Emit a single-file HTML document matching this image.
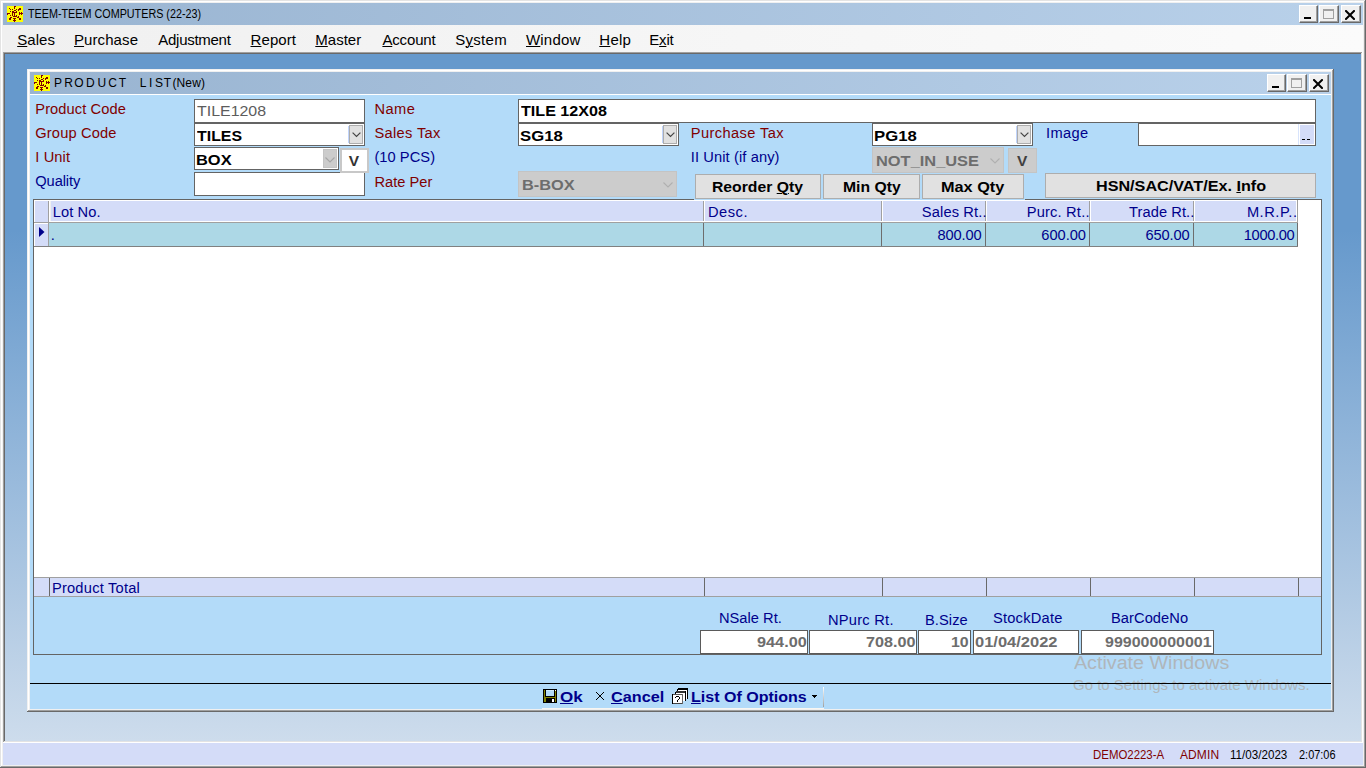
<!DOCTYPE html>
<html><head><meta charset="utf-8">
<style>
*{margin:0;padding:0;box-sizing:border-box}
html,body{width:1366px;height:768px;overflow:hidden;background:#f0f0f0;font-family:"Liberation Sans",sans-serif}
.a{position:absolute}
.t{position:absolute;white-space:nowrap;line-height:20px;font-family:"Liberation Sans",sans-serif}
u{text-decoration:underline;text-decoration-thickness:1px;text-underline-offset:1px}
</style></head><body>

<div class="a" style="left:0px;top:0px;width:1366px;height:768px;background:#f0f0f0"></div>
<div class="a" style="left:0px;top:0px;width:1366px;height:1px;background:#e3e3e3"></div>
<div class="a" style="left:0px;top:0px;width:1px;height:768px;background:#e3e3e3"></div>
<div class="a" style="left:1px;top:1px;width:1364px;height:1px;background:#fff"></div>
<div class="a" style="left:1px;top:1px;width:1px;height:766px;background:#fff"></div>
<div class="a" style="left:1364px;top:1px;width:1px;height:766px;background:#a0a0a0"></div>
<div class="a" style="left:1px;top:766px;width:1364px;height:1px;background:#a0a0a0"></div>
<div class="a" style="left:1365px;top:0px;width:1px;height:768px;background:#696969"></div>
<div class="a" style="left:0px;top:767px;width:1366px;height:1px;background:#696969"></div>
<div class="a" style="left:3px;top:3px;width:1360px;height:22px;background:linear-gradient(to right,#99b4d1,#b9d1ea)"></div>
<svg class="a" style="left:7px;top:6px" width="16" height="16" viewBox="0 0 16 16" shape-rendering="crispEdges"><rect width="16" height="16" fill="#ff0"/><path d="M7 0h1v1h-1zM8 0h1v1h-1zM7 1h1v1h-1zM7 2h1v1h-1zM2 2h1v1h-1zM12 2h1v1h-1zM13 2h1v1h-1zM3 3h1v1h-1zM5 3h1v1h-1zM9 3h1v1h-1zM11 3h1v1h-1zM12 3h1v1h-1zM13 3h1v1h-1zM7 4h1v1h-1zM8 4h1v1h-1zM11 4h1v1h-1zM3 5h1v1h-1zM5 5h1v1h-1zM6 5h1v1h-1zM9 5h1v1h-1zM5 6h1v1h-1zM6 6h1v1h-1zM7 6h1v1h-1zM8 6h1v1h-1zM9 6h1v1h-1zM12 6h1v1h-1zM14 6h1v1h-1zM0 7h1v1h-1zM1 7h1v1h-1zM2 7h1v1h-1zM5 7h1v1h-1zM7 7h1v1h-1zM12 7h1v1h-1zM13 7h1v1h-1zM14 7h1v1h-1zM15 7h1v1h-1zM0 8h1v1h-1zM5 8h1v1h-1zM7 8h1v1h-1zM12 8h1v1h-1zM14 8h1v1h-1zM3 9h1v1h-1zM5 9h1v1h-1zM7 9h1v1h-1zM9 9h1v1h-1zM6 10h1v1h-1zM7 10h1v1h-1zM8 10h1v1h-1zM9 10h1v1h-1zM11 10h1v1h-1zM3 11h1v1h-1zM4 11h1v1h-1zM10 11h1v1h-1zM11 11h1v1h-1zM2 12h1v1h-1zM3 12h1v1h-1zM6 12h1v1h-1zM7 12h1v1h-1zM8 12h1v1h-1zM12 12h1v1h-1zM13 12h1v1h-1zM2 13h1v1h-1zM3 13h1v1h-1zM7 13h1v1h-1zM12 13h1v1h-1zM13 13h1v1h-1zM6 14h1v1h-1zM7 14h1v1h-1zM8 14h1v1h-1zM7 15h1v1h-1z" fill="#800000"/></svg>
<div class="t" style="left:27.60px;top:4px;font-size:12px;font-weight:400;color:#000;transform:scaleX(0.8984);transform-origin:0 0">TEEM-TEEM COMPUTERS (22-23)</div>
<div class="a" style="left:1299px;top:5px;width:19px;height:18px;background:#f0f0f0;border-top:1px solid #fff;border-left:1px solid #fff;border-right:1px solid #696969;border-bottom:1px solid #696969;box-shadow:inset -1px -1px 0 #a0a0a0"></div><div class="a" style="left:1304px;top:17px;width:7px;height:2px;background:#000"></div>
<div class="a" style="left:1319px;top:5px;width:20px;height:18px;background:#f0f0f0;border-top:1px solid #fff;border-left:1px solid #fff;border-right:1px solid #696969;border-bottom:1px solid #696969;box-shadow:inset -1px -1px 0 #a0a0a0"></div><div class="a" style="left:1323px;top:9px;width:11px;height:10px;border:1px solid #a0a0a0;border-top:2px solid #a0a0a0"></div>
<div class="a" style="left:1341px;top:5px;width:20px;height:18px;background:#f0f0f0;border-top:1px solid #fff;border-left:1px solid #fff;border-right:1px solid #696969;border-bottom:1px solid #696969;box-shadow:inset -1px -1px 0 #a0a0a0"></div><svg class="a" style="left:1345px;top:10px" width="10" height="10" viewBox="0 0 10 10"><path d="M1 1L9 9M9 1L1 9" stroke="#000" stroke-width="2" stroke-linecap="square"/></svg>
<div class="a" style="left:3px;top:25px;width:1360px;height:27px;background:linear-gradient(to right,#f0f0f0,#fbfbfb)"></div>
<div class="t" style="left:17.2px;top:30px;font-size:15px;font-weight:400;color:#000;letter-spacing:0.075px"><u>S</u>ales</div>
<div class="t" style="left:74.0px;top:30px;font-size:15px;font-weight:400;color:#000;letter-spacing:0.086px"><u>P</u>urchase</div>
<div class="t" style="left:158.3px;top:30px;font-size:15px;font-weight:400;color:#000;letter-spacing:-0.278px">Ad<u>j</u>ustment</div>
<div class="t" style="left:250.5px;top:30px;font-size:15px;font-weight:400;color:#000;letter-spacing:0.1px"><u>R</u>eport</div>
<div class="t" style="left:315.3px;top:30px;font-size:15px;font-weight:400;color:#000"><u>M</u>aster</div>
<div class="t" style="left:382.4px;top:30px;font-size:15px;font-weight:400;color:#000;letter-spacing:-0.15px"><u>A</u>ccount</div>
<div class="t" style="left:455.2px;top:30px;font-size:15px;font-weight:400;color:#000;letter-spacing:0.3px">S<u>y</u>stem</div>
<div class="t" style="left:526.0px;top:30px;font-size:15px;font-weight:400;color:#000;letter-spacing:0.18px"><u>W</u>indow</div>
<div class="t" style="left:599.3px;top:30px;font-size:15px;font-weight:400;color:#000;letter-spacing:0.233px"><u>H</u>elp</div>
<div class="t" style="left:649.3px;top:30px;font-size:15px;font-weight:400;color:#000;letter-spacing:-0.2px">E<u>x</u>it</div>
<div class="a" style="left:3px;top:52px;width:1360px;height:691px;background:#fff"></div>
<div class="a" style="left:3px;top:52px;width:1359px;height:690px;background:#e3e3e3"></div>
<div class="a" style="left:3px;top:52px;width:1359px;height:1px;background:#a0a0a0"></div>
<div class="a" style="left:3px;top:52px;width:1px;height:690px;background:#a0a0a0"></div>
<div class="a" style="left:4px;top:53px;width:1357px;height:688px;background:#696969"></div>
<div class="a" style="left:5px;top:54px;width:1356px;height:687px;background:linear-gradient(to bottom,#6699cc 0px,#6699cc 176px,#cddcec 687px)"></div>
<div class="a" style="left:3px;top:743px;width:1360px;height:22px;background:#d4dcf8"></div>
<div class="t" style="left:1093.35px;top:745px;font-size:12px;font-weight:400;color:#800000;transform:scaleX(0.9527);transform-origin:0 0">DEMO2223-A</div>
<div class="t" style="left:1180.0px;top:745px;font-size:12px;font-weight:400;color:#800000;letter-spacing:0.1px">ADMIN</div>
<div class="t" style="left:1230.03px;top:745px;font-size:12px;font-weight:400;color:#000;transform:scaleX(0.969);transform-origin:0 0">11/03/2023</div>
<div class="t" style="left:1299.19px;top:745px;font-size:12px;font-weight:400;color:#000;transform:scaleX(0.9128);transform-origin:0 0">2:07:06</div>
<div class="a" style="left:27px;top:69px;width:1307px;height:643px;background:#696969"></div>
<div class="a" style="left:27px;top:69px;width:1306px;height:642px;background:#f0f0f0"></div>
<div class="a" style="left:28px;top:70px;width:1305px;height:641px;background:#a0a0a0"></div>
<div class="a" style="left:28px;top:70px;width:1304px;height:640px;background:#fff"></div>
<div class="a" style="left:29px;top:71px;width:1303px;height:639px;background:#f0f0f0"></div>
<div class="a" style="left:30px;top:72px;width:1301px;height:22px;background:linear-gradient(to right,#99b4d1,#b9d1ea)"></div>
<div class="a" style="left:30px;top:94px;width:1301px;height:1px;background:#fff"></div>
<div class="a" style="left:30px;top:95px;width:1301px;height:614px;background:#b3dbf9"></div>
<svg class="a" style="left:34px;top:75px" width="16" height="16" viewBox="0 0 16 16" shape-rendering="crispEdges"><rect width="16" height="16" fill="#ff0"/><path d="M7 0h1v1h-1zM8 0h1v1h-1zM7 1h1v1h-1zM7 2h1v1h-1zM2 2h1v1h-1zM12 2h1v1h-1zM13 2h1v1h-1zM3 3h1v1h-1zM5 3h1v1h-1zM9 3h1v1h-1zM11 3h1v1h-1zM12 3h1v1h-1zM13 3h1v1h-1zM7 4h1v1h-1zM8 4h1v1h-1zM11 4h1v1h-1zM3 5h1v1h-1zM5 5h1v1h-1zM6 5h1v1h-1zM9 5h1v1h-1zM5 6h1v1h-1zM6 6h1v1h-1zM7 6h1v1h-1zM8 6h1v1h-1zM9 6h1v1h-1zM12 6h1v1h-1zM14 6h1v1h-1zM0 7h1v1h-1zM1 7h1v1h-1zM2 7h1v1h-1zM5 7h1v1h-1zM7 7h1v1h-1zM12 7h1v1h-1zM13 7h1v1h-1zM14 7h1v1h-1zM15 7h1v1h-1zM0 8h1v1h-1zM5 8h1v1h-1zM7 8h1v1h-1zM12 8h1v1h-1zM14 8h1v1h-1zM3 9h1v1h-1zM5 9h1v1h-1zM7 9h1v1h-1zM9 9h1v1h-1zM6 10h1v1h-1zM7 10h1v1h-1zM8 10h1v1h-1zM9 10h1v1h-1zM11 10h1v1h-1zM3 11h1v1h-1zM4 11h1v1h-1zM10 11h1v1h-1zM11 11h1v1h-1zM2 12h1v1h-1zM3 12h1v1h-1zM6 12h1v1h-1zM7 12h1v1h-1zM8 12h1v1h-1zM12 12h1v1h-1zM13 12h1v1h-1zM2 13h1v1h-1zM3 13h1v1h-1zM7 13h1v1h-1zM12 13h1v1h-1zM13 13h1v1h-1zM6 14h1v1h-1zM7 14h1v1h-1zM8 14h1v1h-1zM7 15h1v1h-1z" fill="#800000"/></svg>
<div class="t" style="left:54.1px;top:73px;font-size:12px;color:#000">P</div>
<div class="t" style="left:64.19999999999999px;top:73px;font-size:12px;color:#000">R</div>
<div class="t" style="left:74.19999999999999px;top:73px;font-size:12px;color:#000">O</div>
<div class="t" style="left:85.89999999999999px;top:73px;font-size:12px;color:#000">D</div>
<div class="t" style="left:97.6px;top:73px;font-size:12px;color:#000">U</div>
<div class="t" style="left:108.19999999999999px;top:73px;font-size:12px;color:#000">C</div>
<div class="t" style="left:118.69999999999999px;top:73px;font-size:12px;color:#000">T</div>
<div class="t" style="left:139.79999999999998px;top:73px;font-size:12px;color:#000">L</div>
<div class="t" style="left:149.1px;top:73px;font-size:12px;color:#000">I</div>
<div class="t" style="left:155.0px;top:73px;font-size:12px;color:#000">S</div>
<div class="t" style="left:163.79999999999998px;top:73px;font-size:12px;color:#000">T</div>
<div class="t" style="left:172.5px;top:73px;font-size:12px;color:#000;letter-spacing:0.1px">(New)</div>
<div class="a" style="left:1267px;top:74px;width:19px;height:18px;background:#f0f0f0;border-top:1px solid #fff;border-left:1px solid #fff;border-right:1px solid #696969;border-bottom:1px solid #696969;box-shadow:inset -1px -1px 0 #a0a0a0"></div><div class="a" style="left:1272px;top:86px;width:7px;height:2px;background:#000"></div>
<div class="a" style="left:1287px;top:74px;width:20px;height:18px;background:#f0f0f0;border-top:1px solid #fff;border-left:1px solid #fff;border-right:1px solid #696969;border-bottom:1px solid #696969;box-shadow:inset -1px -1px 0 #a0a0a0"></div><div class="a" style="left:1291px;top:78px;width:11px;height:10px;border:1px solid #a0a0a0;border-top:2px solid #a0a0a0"></div>
<div class="a" style="left:1309px;top:74px;width:20px;height:18px;background:#f0f0f0;border-top:1px solid #fff;border-left:1px solid #fff;border-right:1px solid #696969;border-bottom:1px solid #696969;box-shadow:inset -1px -1px 0 #a0a0a0"></div><svg class="a" style="left:1313px;top:79px" width="10" height="10" viewBox="0 0 10 10"><path d="M1 1L9 9M9 1L1 9" stroke="#000" stroke-width="2" stroke-linecap="square"/></svg>
<div class="t" style="left:35.3px;top:99px;font-size:14.67px;font-weight:400;color:#800000;letter-spacing:0.082px">Product Code</div>
<div class="t" style="left:35.3px;top:123px;font-size:14.67px;font-weight:400;color:#800000;letter-spacing:0.144px">Group Code</div>
<div class="t" style="left:35.3px;top:147px;font-size:14.67px;font-weight:400;color:#800000;letter-spacing:0.1px">I Unit</div>
<div class="t" style="left:35.3px;top:171px;font-size:14.67px;font-weight:400;color:#00008b;letter-spacing:-0.1px">Quality</div>
<div class="t" style="left:374.4px;top:99px;font-size:14.67px;font-weight:400;color:#800000;letter-spacing:0.467px">Name</div>
<div class="t" style="left:374.4px;top:123px;font-size:14.67px;font-weight:400;color:#800000;letter-spacing:0.338px">Sales Tax</div>
<div class="t" style="left:374.4px;top:147px;font-size:14.67px;font-weight:400;color:#00008b;letter-spacing:0.057px">(10 PCS)</div>
<div class="t" style="left:374.4px;top:172px;font-size:14.67px;font-weight:400;color:#800000;letter-spacing:0.029px">Rate Per</div>
<div class="t" style="left:690.8px;top:123px;font-size:14.67px;font-weight:400;color:#800000;letter-spacing:0.391px">Purchase Tax</div>
<div class="t" style="left:690.8px;top:147px;font-size:14.67px;font-weight:400;color:#00008b;letter-spacing:0.1px">II Unit (if any)</div>
<div class="t" style="left:1046.1px;top:123px;font-size:14.67px;font-weight:400;color:#00008b;letter-spacing:0.35px">Image</div>
<div class="a" style="left:194px;top:99px;width:171px;height:24px;background:#fff;border:1px solid #646464"></div>
<div class="a" style="left:194px;top:123px;width:171px;height:23px;background:#fff;border:1px solid #646464"></div>
<div class="a" style="left:194px;top:147px;width:145px;height:23px;background:#fff;border:1px solid #646464"></div>
<div class="a" style="left:194px;top:172px;width:171px;height:24px;background:#fff;border:1px solid #646464"></div>
<div class="a" style="left:518px;top:99px;width:798px;height:24px;background:#fff;border:1px solid #646464"></div>
<div class="a" style="left:518px;top:123px;width:161px;height:23px;background:#fff;border:1px solid #646464"></div>
<div class="a" style="left:872px;top:123px;width:161px;height:23px;background:#fff;border:1px solid #646464"></div>
<div class="a" style="left:1138px;top:123px;width:178px;height:23px;background:#fff;border:1px solid #646464"></div>
<div class="a" style="left:348px;top:126px;width:1px;height:17px;background:#c0d4fc"></div><div class="a" style="left:349px;top:125px;width:14px;height:19px;background:#e1e1e1;border:1px solid #adadad"></div><svg class="a" style="left:352px;top:132px" width="9" height="6" viewBox="0 0 9 6"><path d="M0.6 0.6L4.5 4.5L8.4 0.6" fill="none" stroke="#444" stroke-width="1.2"/></svg>
<div class="a" style="left:323px;top:149px;width:14px;height:19px;background:#cccccc;border:1px solid #c4c4c4"></div><svg class="a" style="left:325px;top:157px" width="10" height="6" viewBox="0 0 10 6"><path d="M0.5 0.5L5 5L9.5 0.5" fill="none" stroke="#a6a6a6" stroke-width="1.1"/></svg>
<div class="a" style="left:1016px;top:126px;width:1px;height:17px;background:#c0d4fc"></div><div class="a" style="left:1017px;top:125px;width:14px;height:19px;background:#e1e1e1;border:1px solid #adadad"></div><svg class="a" style="left:1020px;top:132px" width="9" height="6" viewBox="0 0 9 6"><path d="M0.6 0.6L4.5 4.5L8.4 0.6" fill="none" stroke="#444" stroke-width="1.2"/></svg>
<div class="a" style="left:662px;top:126px;width:1px;height:17px;background:#c0d4fc"></div><div class="a" style="left:663px;top:125px;width:14px;height:19px;background:#e1e1e1;border:1px solid #adadad"></div><svg class="a" style="left:666px;top:132px" width="9" height="6" viewBox="0 0 9 6"><path d="M0.6 0.6L4.5 4.5L8.4 0.6" fill="none" stroke="#444" stroke-width="1.2"/></svg>
<div class="a" style="left:340px;top:148px;width:29px;height:25px;background:#fff;border:2px solid #c8c8c8"></div>
<div class="a" style="left:518px;top:171px;width:159px;height:26px;background:#cccccc;border:1px solid #c4c4c4"></div>
<svg class="a" style="left:663px;top:182px" width="10" height="6" viewBox="0 0 10 6"><path d="M0.5 0.5L5 5L9.5 0.5" fill="none" stroke="#b0b0b0" stroke-width="1.1"/></svg>
<div class="a" style="left:872px;top:147px;width:132px;height:26px;background:#cccccc;border:1px solid #c4c4c4"></div>
<svg class="a" style="left:990px;top:158px" width="10" height="6" viewBox="0 0 10 6"><path d="M0.5 0.5L5 5L9.5 0.5" fill="none" stroke="#b0b0b0" stroke-width="1.1"/></svg>
<div class="a" style="left:1008px;top:148px;width:29px;height:25px;background:#cccccc;border:1px solid #c4c4c4"></div>
<div class="a" style="left:1300px;top:125px;width:14px;height:19px;background:#d4dcf8"></div>
<div class="a" style="left:1298px;top:124px;width:1px;height:21px;background:#d8e4fc"></div>
<div class="a" style="left:1302px;top:139px;width:3px;height:1px;background:#000"></div>
<div class="a" style="left:1307px;top:139px;width:3px;height:1px;background:#000"></div>
<div class="a" style="left:695px;top:174px;width:126px;height:25px;background:#e1e1e1;border:1px solid #adadad"></div>
<div class="a" style="left:823px;top:174px;width:97px;height:25px;background:#e1e1e1;border:1px solid #adadad"></div>
<div class="a" style="left:922px;top:174px;width:102px;height:25px;background:#e1e1e1;border:1px solid #adadad"></div>
<div class="a" style="left:1045px;top:173px;width:271px;height:25px;background:#e1e1e1;border:1px solid #adadad"></div>
<div class="t" style="left:196.80px;top:101px;font-size:15px;font-weight:400;color:#5c5c5c;transform:scaleX(1.0615);transform-origin:0 0">TILE1208</div>
<div class="t" style="left:196.80px;top:126px;font-size:15.5px;font-weight:700;color:#000;transform:scaleX(1.0256);transform-origin:0 0">TILES</div>
<div class="t" style="left:196.04px;top:150px;font-size:15.5px;font-weight:700;color:#000;transform:scaleX(1.0594);transform-origin:0 0">BOX</div>
<div class="t" style="left:520.90px;top:101px;font-size:15.5px;font-weight:700;color:#000;transform:scaleX(1.039);transform-origin:0 0">TILE 12X08</div>
<div class="t" style="left:519.82px;top:126px;font-size:15.5px;font-weight:700;color:#000;transform:scaleX(1.0789);transform-origin:0 0">SG18</div>
<div class="t" style="left:521.54px;top:175px;font-size:15.5px;font-weight:700;color:#6d6d6d;transform:scaleX(1.0551);transform-origin:0 0">B-BOX</div>
<div class="t" style="left:873.92px;top:126px;font-size:15.5px;font-weight:700;color:#000;transform:scaleX(1.0789);transform-origin:0 0">PG18</div>
<div class="t" style="left:876.24px;top:151px;font-size:15.5px;font-weight:700;color:#6d6d6d;transform:scaleX(1.0583);transform-origin:0 0">NOT_IN_USE</div>
<div class="t" style="left:348.7px;top:151px;font-size:15.5px;font-weight:700;color:#333">V</div>
<div class="t" style="left:1017.0px;top:151px;font-size:15.5px;font-weight:700;color:#404040">V</div>
<div class="t" style="left:711.69px;top:177px;font-size:15.5px;font-weight:700;color:#000;transform:scaleX(1.0146);transform-origin:0 0">Reorder <u>Q</u>ty</div>
<div class="t" style="left:842.78px;top:177px;font-size:15.5px;font-weight:700;color:#000;transform:scaleX(1.0161);transform-origin:0 0">Min Qty</div>
<div class="t" style="left:940.75px;top:177px;font-size:15.5px;font-weight:700;color:#000;transform:scaleX(1.0492);transform-origin:0 0">Max Qty</div>
<div class="t" style="left:1095.76px;top:176px;font-size:15.5px;font-weight:700;color:#000;transform:scaleX(1.0426);transform-origin:0 0">HSN/SAC/VAT/Ex. <u>I</u>nfo</div>
<div class="a" style="left:33px;top:199px;width:1289px;height:456px;background:#b3dbf9;border:1px solid #646464"></div>
<div class="a" style="left:34px;top:200px;width:1287px;height:377px;background:#fff"></div>
<div class="a" style="left:34px;top:200px;width:1263px;height:22px;background:#d4dcf8;border-top:1px solid #fff"></div>
<div class="a" style="left:34px;top:222px;width:1263px;height:1px;background:#a0a0a0"></div>
<div class="a" style="left:34px;top:201px;width:1px;height:21px;background:#fff"></div>
<div class="a" style="left:49px;top:201px;width:1px;height:20px;background:#fff"></div>
<div class="a" style="left:50px;top:201px;width:1px;height:20px;background:#f0f0f0"></div>
<div class="a" style="left:703px;top:201px;width:1px;height:20px;background:#a0a0a0"></div>
<div class="a" style="left:704px;top:201px;width:1px;height:20px;background:#fff"></div>
<div class="a" style="left:881px;top:201px;width:1px;height:20px;background:#a0a0a0"></div>
<div class="a" style="left:882px;top:201px;width:1px;height:20px;background:#fff"></div>
<div class="a" style="left:985px;top:201px;width:1px;height:20px;background:#a0a0a0"></div>
<div class="a" style="left:986px;top:201px;width:1px;height:20px;background:#fff"></div>
<div class="a" style="left:1089px;top:201px;width:1px;height:20px;background:#a0a0a0"></div>
<div class="a" style="left:1090px;top:201px;width:1px;height:20px;background:#fff"></div>
<div class="a" style="left:1193px;top:201px;width:1px;height:20px;background:#a0a0a0"></div>
<div class="a" style="left:1194px;top:201px;width:1px;height:20px;background:#fff"></div>
<div class="a" style="left:49px;top:221px;width:1247px;height:1px;background:#fff"></div>
<div class="a" style="left:1296px;top:201px;width:1px;height:21px;background:#fff"></div>
<div class="a" style="left:1297px;top:200px;width:1px;height:23px;background:#a0a0a0"></div>
<div class="a" style="left:694px;top:199px;width:331px;height:1px;background:#b3dbf9"></div>
<div class="a" style="left:34px;top:223px;width:14px;height:23px;background:#d4dcf8;border-top:1px solid #fff;border-left:1px solid #fff"></div>
<div class="a" style="left:49px;top:223px;width:1248px;height:23px;background:#add8e6"></div>
<div class="a" style="left:34px;top:246px;width:1264px;height:1px;background:#808080"></div>
<div class="a" style="left:703px;top:223px;width:1px;height:23px;background:#6d6d6d"></div>
<div class="a" style="left:881px;top:223px;width:1px;height:23px;background:#6d6d6d"></div>
<div class="a" style="left:985px;top:223px;width:1px;height:23px;background:#6d6d6d"></div>
<div class="a" style="left:1089px;top:223px;width:1px;height:23px;background:#6d6d6d"></div>
<div class="a" style="left:1193px;top:223px;width:1px;height:23px;background:#6d6d6d"></div>
<div class="a" style="left:1297px;top:223px;width:1px;height:23px;background:#6d6d6d"></div>
<div class="a" style="left:48px;top:201px;width:1px;height:45px;background:#a0a0a0"></div>
<svg class="a" style="left:39px;top:227px" width="6" height="10" viewBox="0 0 6 10"><path d="M0 0L5.5 5L0 10Z" fill="#00008b"/></svg>
<div class="t" style="left:52.8px;top:202px;font-size:14.67px;font-weight:400;color:#00008b;letter-spacing:0.092px">Lot No.</div>
<div class="t" style="left:708.0px;top:202px;font-size:14.67px;font-weight:400;color:#00008b;letter-spacing:0.5px">Desc.</div>
<div class="t" style="left:921.8px;top:202px;font-size:14.67px;font-weight:400;color:#00008b;letter-spacing:0.133px">Sales Rt..</div>
<div class="t" style="left:1026.7px;top:202px;font-size:14.67px;font-weight:400;color:#00008b;letter-spacing:0.189px">Purc. Rt..</div>
<div class="t" style="left:1129.1px;top:202px;font-size:14.67px;font-weight:400;color:#00008b;letter-spacing:0.056px">Trade Rt..</div>
<div class="t" style="left:1246.9px;top:202px;font-size:14.67px;font-weight:400;color:#00008b;letter-spacing:0.517px">M.R.P..</div>
<div class="t" style="left:937.5px;top:225px;font-size:14.67px;font-weight:400;color:#00008b;letter-spacing:-0.16px">800.00</div>
<div class="t" style="left:1041.3px;top:225px;font-size:14.67px;font-weight:400;color:#00008b;letter-spacing:-0.04px">600.00</div>
<div class="t" style="left:1145.5px;top:225px;font-size:14.67px;font-weight:400;color:#00008b;letter-spacing:-0.14px">650.00</div>
<div class="t" style="left:1243.8px;top:225px;font-size:14.67px;font-weight:400;color:#00008b;letter-spacing:-0.35px">1000.00</div>
<div class="t" style="left:50.8px;top:225px;font-size:14.67px;font-weight:400;color:#00008b">.</div>
<div class="a" style="left:34px;top:577px;width:1287px;height:1px;background:#a0a0a0"></div>
<div class="a" style="left:34px;top:578px;width:1287px;height:18px;background:#d4dcf8"></div>
<div class="a" style="left:34px;top:596px;width:1287px;height:1px;background:#a0a0a0"></div>
<div class="a" style="left:49px;top:578px;width:1px;height:18px;background:#696969"></div>
<div class="a" style="left:704px;top:578px;width:1px;height:18px;background:#696969"></div>
<div class="a" style="left:882px;top:578px;width:1px;height:18px;background:#696969"></div>
<div class="a" style="left:986px;top:578px;width:1px;height:18px;background:#696969"></div>
<div class="a" style="left:1090px;top:578px;width:1px;height:18px;background:#696969"></div>
<div class="a" style="left:1194px;top:578px;width:1px;height:18px;background:#696969"></div>
<div class="a" style="left:1298px;top:578px;width:1px;height:18px;background:#696969"></div>
<div class="t" style="left:51.9px;top:578px;font-size:14.67px;font-weight:400;color:#00008b;letter-spacing:0.225px">Product Total</div>
<div class="t" style="left:718.9px;top:608px;font-size:14.67px;font-weight:400;color:#00008b;letter-spacing:0.038px">NSale Rt.</div>
<div class="t" style="left:827.9px;top:610px;font-size:14.67px;font-weight:400;color:#00008b;letter-spacing:0.263px">NPurc Rt.</div>
<div class="t" style="left:924.9px;top:610px;font-size:14.67px;font-weight:400;color:#00008b;letter-spacing:0.1px">B.Size</div>
<div class="t" style="left:992.9px;top:608px;font-size:14.67px;font-weight:400;color:#00008b;letter-spacing:0.237px">StockDate</div>
<div class="t" style="left:1110.9px;top:608px;font-size:14.67px;font-weight:400;color:#00008b;letter-spacing:0.087px">BarCodeNo</div>
<div class="a" style="left:700px;top:630px;width:108px;height:24px;background:#fff;border:1px solid #5a5a5a"></div>
<div class="a" style="left:809px;top:630px;width:108px;height:24px;background:#fff;border:1px solid #5a5a5a"></div>
<div class="a" style="left:918px;top:630px;width:53px;height:24px;background:#fff;border:1px solid #5a5a5a"></div>
<div class="a" style="left:973px;top:630px;width:106px;height:24px;background:#fff;border:1px solid #5a5a5a"></div>
<div class="a" style="left:1081px;top:630px;width:133px;height:24px;background:#fff;border:1px solid #5a5a5a"></div>
<div class="t" style="left:756.50px;top:632px;font-size:15.5px;font-weight:700;color:#6d6d6d;transform:scaleX(1.0489);transform-origin:0 0">944.00</div>
<div class="t" style="left:865.66px;top:632px;font-size:15.5px;font-weight:700;color:#6d6d6d;transform:scaleX(1.0435);transform-origin:0 0">708.00</div>
<div class="t" style="left:951.18px;top:632px;font-size:15.5px;font-weight:700;color:#6d6d6d;transform:scaleX(1.025);transform-origin:0 0">10</div>
<div class="t" style="left:974.54px;top:632px;font-size:15.5px;font-weight:700;color:#6d6d6d;transform:scaleX(1.0632);transform-origin:0 0">01/04/2022</div>
<div class="t" style="left:1104.90px;top:632px;font-size:15.5px;font-weight:700;color:#6d6d6d;transform:scaleX(1.0301);transform-origin:0 0">999000000001</div>
<div class="a" style="left:30px;top:683px;width:1301px;height:1px;background:#000"></div>
<svg class="a" style="left:543px;top:689px" width="14" height="14" viewBox="0 0 14 14" shape-rendering="crispEdges">
<rect width="14" height="14" fill="#000"/>
<rect x="1" y="1" width="1" height="12" fill="#808000"/><rect x="12" y="2" width="1" height="11" fill="#808000"/>
<rect x="1" y="8" width="12" height="1" fill="#808000"/><rect x="2" y="8" width="1" height="5" fill="#808000"/>
<rect x="3" y="1" width="8" height="6" fill="#b3dbf9"/><rect x="3" y="1" width="8" height="1" fill="#d0ecff"/>
<rect x="9" y="10" width="2" height="3" fill="#fff"/><rect x="12" y="1" width="1" height="1" fill="#fff"/></svg>
<div class="t" style="left:560.30px;top:687px;font-size:15.5px;font-weight:700;color:#00008b;transform:scaleX(1.095);transform-origin:0 0"><u>O</u>k</div>
<svg class="a" style="left:595px;top:691px" width="10" height="10" viewBox="0 0 10 10"><path d="M1 1L9 9M9 1L1 9" stroke="#000" stroke-width="1"/></svg>
<div class="t" style="left:610.55px;top:687px;font-size:15.5px;font-weight:700;color:#00008b;transform:scaleX(1.0469);transform-origin:0 0"><u>C</u>ancel</div>
<svg class="a" style="left:672px;top:688px" width="16" height="16" viewBox="0 0 16 16" shape-rendering="crispEdges">
<rect x="6" y="0" width="10" height="2" fill="#000"/><rect x="6" y="2" width="9" height="9" fill="#fff"/><rect x="15" y="1" width="1" height="10" fill="#000"/><rect x="5" y="1" width="1" height="2" fill="#000"/>
<rect x="4" y="3" width="10" height="2" fill="#333"/><rect x="4" y="5" width="9" height="8" fill="#fff"/><rect x="13" y="3" width="1" height="10" fill="#000"/><rect x="3" y="4" width="1" height="2" fill="#000"/>
<rect x="1" y="6" width="10" height="1" fill="#555"/><rect x="1" y="7" width="9" height="9" fill="#fff"/><rect x="0" y="6" width="1" height="10" fill="#000"/><rect x="1" y="15" width="10" height="1" fill="#444"/><rect x="10" y="6" width="1" height="10" fill="#666"/>
<path d="M3 9h1v-1h3v1h1v2h-1v1h-1v2h-1v-2h1v-1h1v-2h-3v1h-1z" fill="#000"/>
</svg>
<div class="t" style="left:690.57px;top:687px;font-size:15.5px;font-weight:700;color:#00008b;transform:scaleX(1.0336);transform-origin:0 0"><u>L</u>ist Of Options</div>
<svg class="a" style="left:812px;top:695px" width="5" height="3" viewBox="0 0 5 3" shape-rendering="crispEdges"><path d="M0 0H5V1H4V2H3V3H2V2H1V1H0Z" fill="#000"/></svg>
<div class="a" style="left:823px;top:687px;width:1px;height:20px;background:linear-gradient(to bottom,#fff,#a0a0a0)"></div>
<div class="a" style="left:542px;top:708px;width:282px;height:1px;background:#f8f6f2"></div>
<div class="t" style="left:1073.80px;top:653px;font-size:18px;font-weight:400;color:#afb6bb;transform:scaleX(1.093);transform-origin:0 0">Activate Windows</div>
<div class="t" style="left:1072.77px;top:675px;font-size:14.5px;font-weight:400;color:#afb6bb;transform:scaleX(1.0344);transform-origin:0 0">Go to Settings to activate Windows.</div>
<div class="a" style="left:30px;top:683px;width:1301px;height:1px;background:#000"></div>
</body></html>
